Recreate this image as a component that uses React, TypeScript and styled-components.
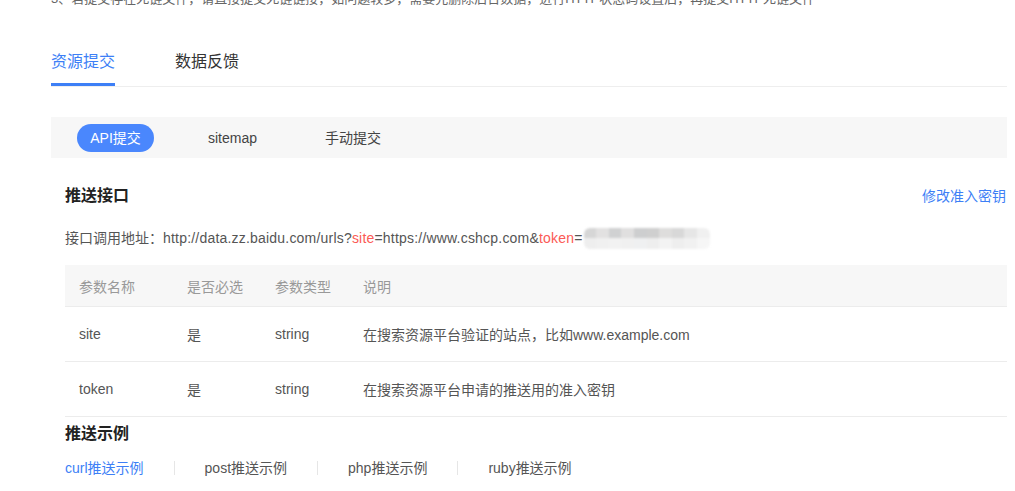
import React from "react";
import styled, { createGlobalStyle } from "styled-components";

const GlobalStyle = createGlobalStyle`
  html, body { margin: 0; padding: 0; background: #fff; }
  body {
    font-family: "Liberation Sans", "Noto Sans CJK SC", sans-serif;
    color: #333;
    overflow: hidden;
  }
`;

const Page = styled.div`
  padding: 0 8px 0 51px;
  width: 956px;
`;

const Notice = styled.div`
  margin-top: -11px;
  height: 20px;
  line-height: 20px;
  font-size: 13px;
  color: #666;
  white-space: nowrap;
  overflow: hidden;
  width: 800px;
`;

const TabBar = styled.div`
  margin-top: 31px;
  display: flex;
  border-bottom: 1px solid #eeeeee;
`;

const Tab = styled.div<{ $active?: boolean }>`
  font-size: 16px;
  line-height: 43px;
  margin-right: 60px;
  color: ${(p) => (p.$active ? "#3d7ff6" : "#333")};
  border-bottom: 3px solid ${(p) => (p.$active ? "#3d7ff6" : "transparent")};
`;

const SubBar = styled.div`
  margin-top: 30px;
  height: 41px;
  background: #f7f7f7;
  display: flex;
  align-items: center;
  padding-left: 26px;
`;

const SubTab = styled.div<{ $active?: boolean; $gap: number }>`
  margin-left: ${(p) => p.$gap}px;
  height: 28px;
  line-height: 28px;
  font-size: 14px;
  border-radius: 14px;
  text-align: center;
  min-width: ${(p) => (p.$active ? "77px" : "0")};
  background: ${(p) => (p.$active ? "#4a87fd" : "transparent")};
  color: ${(p) => (p.$active ? "#fff" : "#444")};
`;

const Section = styled.div`
  padding: 0 1px 0 14px;
`;

const HeadRow = styled.div<{ $top: number }>`
  margin-top: ${(p) => p.$top}px;
  display: flex;
  justify-content: space-between;
  align-items: center;
  height: 20px;
`;

const Title = styled.div`
  font-size: 16px;
  font-weight: bold;
  color: #222;
  line-height: 20px;
`;

const LinkText = styled.a`
  font-size: 14px;
  color: #3d7ff6;
  text-decoration: none;
  line-height: 20px;
`;

const UrlLine = styled.div`
  margin-top: 22px;
  height: 20px;
  line-height: 20px;
  font-size: 14px;
  color: #555;
  display: flex;
  align-items: center;
  white-space: nowrap;
`;

const Url = styled.span`
  letter-spacing: 0.2px;
`;

const Key = styled.span`
  color: #fb5a55;
`;

const Mosaic = styled.span`
  display: inline-grid;
  grid-template-columns: repeat(10, 12.6px);
  grid-template-rows: 10px 11px;
  filter: blur(0.8px);
  border-radius: 6px;
  overflow: hidden;
  margin-left: 1px;
`;

const Cell = styled.span<{ $c: string }>`
  background: ${(p) => p.$c};
`;

const Table = styled.div`
  margin-top: 17px;
  margin-right: -1px;
`;

const TRow = styled.div<{ $head?: boolean }>`
  display: grid;
  grid-template-columns: 108px 88px 88px 1fr;
  padding-left: 14px;
  height: ${(p) => (p.$head ? 41 : 54)}px;
  align-items: center;
  background: ${(p) => (p.$head ? "#f7f7f7" : "#fff")};
  border-bottom: 1px solid #ececec;
  font-size: 14px;
  color: ${(p) => (p.$head ? "#999" : "#555")};
`;

const Examples = styled.div`
  margin-top: 14px;
  display: flex;
  align-items: center;
  height: 20px;
`;

const ExampleLink = styled.a<{ $active?: boolean; $first?: boolean }>`
  font-size: 14px;
  line-height: 20px;
  text-decoration: none;
  color: ${(p) => (p.$active ? "#3d7ff6" : "#555")};
  padding: 0 30px 0 ${(p) => (p.$first ? 0 : 30)}px;
`;

const Divider = styled.span`
  width: 1px;
  height: 14px;
  background: #e6e6e6;
`;

const top = ["#d6d6d6", "#e2e1e1", "#d0d1d2", "#e0dfdf", "#cdcecf", "#cfcfcf", "#dedddc", "#d8d8d8", "#e6e6e6", "#f0f0f0"];
const bottom = ["#eeeeee", "#f0f0f0", "#f2f2f2", "#f0f0f0", "#eff0f1", "#eeeeee", "#f3f3f3", "#eeeeee", "#f1f1f1", "#f6f6f6"];

const rows = [
  ["site", "是", "string", "在搜索资源平台验证的站点，比如www.example.com"],
  ["token", "是", "string", "在搜索资源平台申请的推送用的准入密钥"],
];

export default function App() {
  return (
    <>
      <GlobalStyle />
      <Page>
        <Notice>
          3、若提交存在死链文件，请直接提交死链链接，如问题较多，需要先删除后台数据，进行HTTP状态码设置后，再提交HTTP死链文件
        </Notice>
        <TabBar>
          <Tab $active>资源提交</Tab>
          <Tab>数据反馈</Tab>
        </TabBar>
        <SubBar>
          <SubTab $active $gap={0}>API提交</SubTab>
          <SubTab $gap={54}>sitemap</SubTab>
          <SubTab $gap={68}>手动提交</SubTab>
        </SubBar>
        <Section>
          <HeadRow $top={28}>
            <Title>推送接口</Title>
            <LinkText href="#">修改准入密钥</LinkText>
          </HeadRow>
          <UrlLine>
            接口调用地址：
            <Url>
              http://data.zz.baidu.com/urls?<Key>site</Key>=https://www.cshcp.com&amp;<Key>token</Key>=
            </Url>
            <Mosaic>
              {top.map((c, i) => (
                <Cell key={"t" + i} $c={c} />
              ))}
              {bottom.map((c, i) => (
                <Cell key={"b" + i} $c={c} />
              ))}
            </Mosaic>
          </UrlLine>
          <Table>
            <TRow $head>
              <span>参数名称</span>
              <span>是否必选</span>
              <span>参数类型</span>
              <span>说明</span>
            </TRow>
            {rows.map((r) => (
              <TRow key={r[0]}>
                {r.map((c, i) => (
                  <span key={i}>{c}</span>
                ))}
              </TRow>
            ))}
          </Table>
        </Section>
        <HeadRow $top={7}>
          <Section>
            <Title>推送示例</Title>
          </Section>
        </HeadRow>
        <Section>
          <Examples>
            <ExampleLink href="#" $active $first>curl推送示例</ExampleLink>
            <Divider />
            <ExampleLink href="#">post推送示例</ExampleLink>
            <Divider />
            <ExampleLink href="#">php推送示例</ExampleLink>
            <Divider />
            <ExampleLink href="#">ruby推送示例</ExampleLink>
          </Examples>
        </Section>
      </Page>
    </>
  );
}
